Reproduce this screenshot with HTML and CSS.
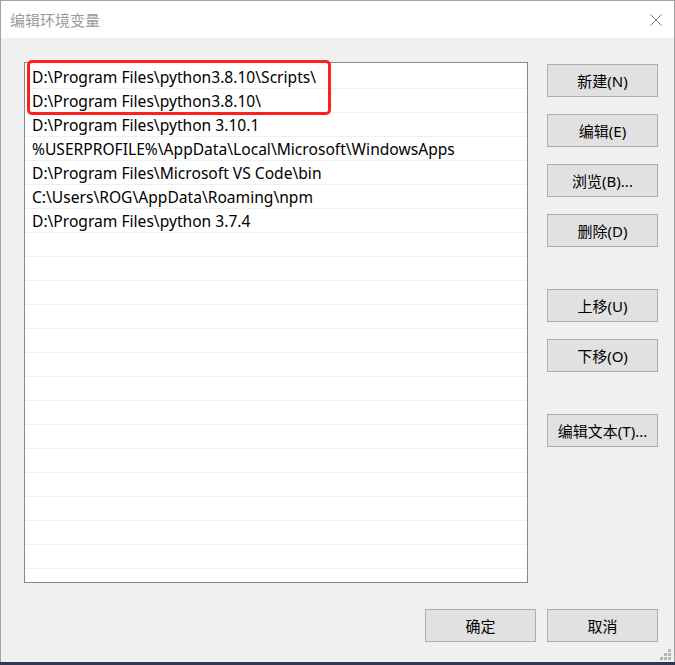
FILE: index.html
```html
<!DOCTYPE html>
<html lang="zh-CN">
<head>
  <meta charset="UTF-8">
  <title>编辑环境变量</title>
  <link rel="stylesheet" href="styles.css">
</head>
<body>
  <div class="window">
    <div class="titlebar">
      <span class="title">编辑环境变量</span>
      <svg class="close" width="12" height="12" viewBox="0 0 12 12">
        <path d="M0.5 0.5 L11.5 11.5 M11.5 0.5 L0.5 11.5" stroke="#7a7a7a" stroke-width="1" fill="none"/>
      </svg>
    </div>
    <div class="content">
      <div class="main">
        <div class="list-wrap">
          <div class="list">
            <div class="row">D:\Program Files\python3.8.10\Scripts\</div>
            <div class="row">D:\Program Files\python3.8.10\</div>
            <div class="row">D:\Program Files\python 3.10.1</div>
            <div class="row">%USERPROFILE%\AppData\Local\Microsoft\WindowsApps</div>
            <div class="row">D:\Program Files\Microsoft VS Code\bin</div>
            <div class="row">C:\Users\ROG\AppData\Roaming\npm</div>
            <div class="row">D:\Program Files\python 3.7.4</div>
            <div class="row"></div>
            <div class="row"></div>
            <div class="row"></div>
            <div class="row"></div>
            <div class="row"></div>
            <div class="row"></div>
            <div class="row"></div>
            <div class="row"></div>
            <div class="row"></div>
            <div class="row"></div>
            <div class="row"></div>
            <div class="row"></div>
            <div class="row"></div>
            <div class="row"></div>
            <div class="row"></div>
          </div>
          <div class="highlight"></div>
        </div>
        <div class="side">
          <div class="group">
            <button class="btn">新建(N)</button>
            <button class="btn">编辑(E)</button>
            <button class="btn">浏览(B)...</button>
            <button class="btn">删除(D)</button>
          </div>
          <div class="group">
            <button class="btn">上移(U)</button>
            <button class="btn">下移(O)</button>
          </div>
          <div class="group">
            <button class="btn">编辑文本(T)...</button>
          </div>
        </div>
      </div>
      <div class="footer">
        <button class="btn">确定</button>
        <button class="btn">取消</button>
      </div>
    </div>
    <svg class="grip" width="12" height="12" viewBox="0 0 12 12">
      <rect x="8" y="0" width="3" height="3" fill="#b4b4b4"/>
      <rect x="4" y="4" width="3" height="3" fill="#b4b4b4"/>
      <rect x="8" y="4" width="3" height="3" fill="#b4b4b4"/>
      <rect x="0" y="8" width="3" height="3" fill="#b4b4b4"/>
      <rect x="4" y="8" width="3" height="3" fill="#b4b4b4"/>
      <rect x="8" y="8" width="3" height="3" fill="#b4b4b4"/>
    </svg>
  </div>
</body>
</html>
```

FILE: styles.css
```css
html, body {
  margin: 0;
  padding: 0;
}
body {
  width: 675px;
  height: 665px;
  overflow: hidden;
  background-color: #2b3a50;
  font-family: "Noto Sans", "Noto Sans CJK SC", sans-serif;
  font-size: 15px;
  color: #000;
}
.window {
  position: relative;
  box-sizing: border-box;
  width: 675px;
  height: 662px;
  border: 1px solid #a3a3a3;
  border-bottom: none;
  background-color: #f0f0f0;
}
.titlebar {
  height: 37px;
  background-color: #fff;
  display: flex;
  align-items: center;
  justify-content: space-between;
  padding: 0 12px 0 9px;
}
.title {
  color: #9a9a9a;
  font-family: "Noto Sans CJK SC", sans-serif;
}
.close {
  display: block;
}
.content {
  padding: 24px 16px 0 23px;
}
.main {
  display: flex;
  gap: 19px;
}
.list-wrap {
  position: relative;
}
.list {
  box-sizing: border-box;
  width: 504px;
  height: 521px;
  border: 1px solid #828790;
  background-color: #fff;
  padding: 2px 1px 0 1px;
  overflow: hidden;
}
.row {
  box-sizing: border-box;
  height: 24px;
  line-height: 24px;
  font-size: 15.6px;
  border-bottom: 1px solid #f0f0f0;
  padding-left: 6px;
  white-space: nowrap;
}
.highlight {
  position: absolute;
  left: 3px;
  top: -2px;
  width: 304px;
  height: 55px;
  box-sizing: border-box;
  border: 3px solid #ff1f1f;
  border-radius: 5px;
}
.side {
  display: flex;
  flex-direction: column;
  gap: 42px;
  padding-top: 2px;
}
.group {
  display: flex;
  flex-direction: column;
  gap: 17px;
}
.btn {
  box-sizing: border-box;
  width: 111px;
  height: 33px;
  margin: 0;
  padding: 0;
  border: 1px solid #adadad;
  background-color: #e1e1e1;
  font-family: "Noto Sans", "Noto Sans CJK SC", sans-serif;
  font-size: 15px;
  color: #000;
}
.footer {
  display: flex;
  justify-content: flex-end;
  gap: 11px;
  margin-top: 26px;
}
.grip {
  position: absolute;
  right: 2px;
  bottom: 1px;
}
```
